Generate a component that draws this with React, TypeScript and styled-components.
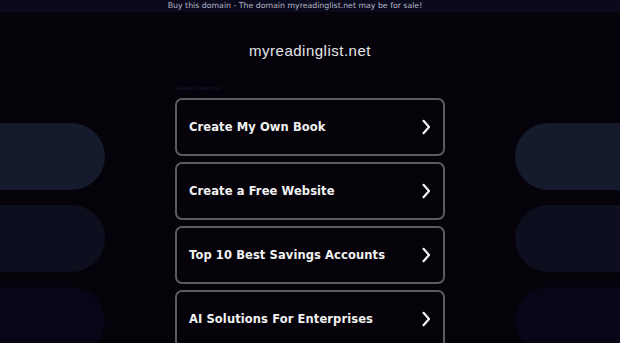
import React from 'react';
import styled, { createGlobalStyle } from 'styled-components';

const GlobalStyle = createGlobalStyle`
  html, body {
    margin: 0;
    padding: 0;
    background: #050309;
    overflow: hidden;
  }
`;

const Page = styled.div`
  width: 620px;
  height: 343px;
  overflow: hidden;
  background: #050309;
  font-family: "DejaVu Sans", Verdana, sans-serif;
`;

const TopBar = styled.div`
  height: 12px;
  padding-right: 30px;
  background: #0a0a1c;
  color: #b8b8c8;
  font-size: 7.8px;
  line-height: 12px;
  text-align: center;
`;

const Body = styled.div`
  display: grid;
  grid-template-columns: 105px 1fr 105px;
`;

const Side = styled.div`
  display: flex;
  flex-direction: column;
  gap: 15px;
  padding-top: 111px;
`;

const Pill = styled.div<{ $shade: string; $right?: boolean }>`
  width: 105px;
  height: 67px;
  flex-shrink: 0;
  background: ${p => p.$shade};
  border-radius: ${p => (p.$right ? '34px 0 0 34px' : '0 34px 34px 0')};
`;

const Center = styled.main`
  display: flex;
  flex-direction: column;
  align-items: center;
`;

const Title = styled.h1`
  margin: 30px 0 0;
  font-family: "Liberation Sans", Arial, sans-serif;
  font-size: 15px;
  font-weight: normal;
  letter-spacing: 0.5px;
  line-height: 17px;
  color: #e6e6ea;
`;

const Related = styled.div`
  width: 270px;
  margin-top: 24px;
  font-family: "Liberation Sans", Arial, sans-serif;
  font-size: 6px;
  line-height: 10px;
  color: #16162e;
`;

const List = styled.div`
  display: flex;
  flex-direction: column;
  gap: 6px;
  margin-top: 5px;
`;

const Item = styled.a`
  box-sizing: border-box;
  width: 270px;
  height: 58px;
  display: flex;
  align-items: center;
  justify-content: space-between;
  padding: 0 12px;
  border: 2px solid #5c5c60;
  border-radius: 7px;
  background: #050309;
  color: #f2f2f2;
  text-decoration: none;
  font-size: 11.5px;
  font-weight: bold;
  letter-spacing: 0.1px;
  white-space: nowrap;
`;

const Chevron = () => (
  <svg width="10" height="16" viewBox="0 0 10 16" fill="none">
    <path d="M2.5 1.8 L8 8 L2.5 14.2" stroke="#f2f2f2" strokeWidth="2.2" strokeLinecap="round" strokeLinejoin="round" />
  </svg>
);

const items = [
  'Create My Own Book',
  'Create a Free Website',
  'Top 10 Best Savings Accounts',
  'AI Solutions For Enterprises',
];

const shades = ['#151a2d', '#0d0e1e', '#060616'];

const App: React.FC = () => {
  return (
    <Page>
      <GlobalStyle />
      <TopBar>Buy this domain - The domain myreadinglist.net may be for sale!</TopBar>
      <Body>
        <Side>
          {shades.map(s => (
            <Pill key={s} $shade={s} />
          ))}
        </Side>
        <Center>
          <Title>myreadinglist.net</Title>
          <Related>Related searches</Related>
          <List>
            {items.map(t => (
              <Item key={t} href="#">
                <span>{t}</span>
                <Chevron />
              </Item>
            ))}
          </List>
        </Center>
        <Side>
          {shades.map(s => (
            <Pill key={s} $shade={s} $right />
          ))}
        </Side>
      </Body>
    </Page>
  );
};

export default App;
